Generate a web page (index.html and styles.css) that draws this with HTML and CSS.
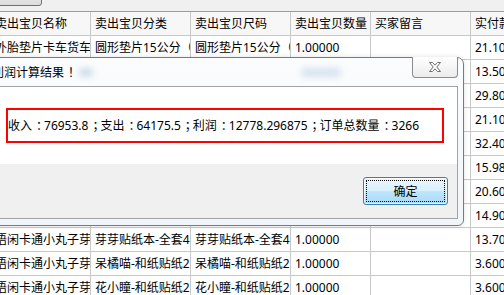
FILE: index.html
```html
<!DOCTYPE html>
<html lang="zh-CN">

<head>
    <meta charset="UTF-8">
    <title>订单利润</title>
    <link rel="stylesheet" href="styles.css">
</head>

<body>
    <div class="toolbar">
        <button class="tool-btn">计算</button>
    </div>

    <div class="grid">
        <div class="row head">
            <div class="cell">卖出宝贝名称</div>
            <div class="cell">卖出宝贝分类</div>
            <div class="cell">卖出宝贝尺码</div>
            <div class="cell">卖出宝贝数量</div>
            <div class="cell">买家留言</div>
            <div class="cell">实付款(元)</div>
        </div>
        <div class="row">
            <div class="cell">外胎垫片卡车货车轮胎</div>
            <div class="cell">圆形垫片15公分（10片）</div>
            <div class="cell">圆形垫片15公分（10片）</div>
            <div class="cell">1.00000</div>
            <div class="cell"></div>
            <div class="cell">21.1000</div>
        </div>
        <div class="row">
            <div class="cell">外胎垫片卡车货车轮胎</div>
            <div class="cell">圆形垫片10公分（5片）</div>
            <div class="cell">圆形垫片10公分（5片）</div>
            <div class="cell">1.00000</div>
            <div class="cell"></div>
            <div class="cell">13.5000</div>
        </div>
        <div class="row">
            <div class="cell">外胎垫片卡车货车轮胎</div>
            <div class="cell">圆形垫片20公分（10片）</div>
            <div class="cell">圆形垫片20公分（10片）</div>
            <div class="cell">1.00000</div>
            <div class="cell"></div>
            <div class="cell">29.8000</div>
        </div>
        <div class="row">
            <div class="cell">外胎垫片卡车货车轮胎</div>
            <div class="cell">圆形垫片15公分（10片）</div>
            <div class="cell">圆形垫片15公分（10片）</div>
            <div class="cell">1.00000</div>
            <div class="cell"></div>
            <div class="cell">21.1000</div>
        </div>
        <div class="row">
            <div class="cell">外胎垫片卡车货车轮胎</div>
            <div class="cell">圆形垫片25公分（10片）</div>
            <div class="cell">圆形垫片25公分（10片）</div>
            <div class="cell">1.00000</div>
            <div class="cell"></div>
            <div class="cell">32.4000</div>
        </div>
        <div class="row">
            <div class="cell">语闲卡通小丸子芽芽</div>
            <div class="cell">芽芽贴纸本-全套2本</div>
            <div class="cell">芽芽贴纸本-全套2本</div>
            <div class="cell">1.00000</div>
            <div class="cell"></div>
            <div class="cell">15.9800</div>
        </div>
        <div class="row">
            <div class="cell">语闲卡通小丸子芽芽</div>
            <div class="cell">芽芽贴纸本-全套6本</div>
            <div class="cell">芽芽贴纸本-全套6本</div>
            <div class="cell">1.00000</div>
            <div class="cell"></div>
            <div class="cell">20.6000</div>
        </div>
        <div class="row">
            <div class="cell">语闲卡通小丸子芽芽</div>
            <div class="cell">芽芽贴纸本-全套3本</div>
            <div class="cell">芽芽贴纸本-全套3本</div>
            <div class="cell">1.00000</div>
            <div class="cell"></div>
            <div class="cell">14.9000</div>
        </div>
        <div class="row">
            <div class="cell">语闲卡通小丸子芽芽</div>
            <div class="cell">芽芽贴纸本-全套4本</div>
            <div class="cell">芽芽贴纸本-全套4本</div>
            <div class="cell">1.00000</div>
            <div class="cell"></div>
            <div class="cell">13.7000</div>
        </div>
        <div class="row">
            <div class="cell">语闲卡通小丸子芽芽</div>
            <div class="cell">呆橘喵-和纸贴纸2卷</div>
            <div class="cell">呆橘喵-和纸贴纸2卷</div>
            <div class="cell">1.00000</div>
            <div class="cell"></div>
            <div class="cell">3.60000</div>
        </div>
        <div class="row">
            <div class="cell">语闲卡通小丸子芽芽</div>
            <div class="cell">花小瞳-和纸贴纸2卷</div>
            <div class="cell">花小瞳-和纸贴纸2卷</div>
            <div class="cell">1.00000</div>
            <div class="cell"></div>
            <div class="cell">3.60000</div>
        </div>
    </div>

    <!-- result message box over the grid -->
    <div class="dialog">
        <div class="title">
            <span>利润计算结果<span class="p">！</span></span>
            <span class="glow"></span>
            <span class="glow wide"></span>
        </div>
        <button class="close">
            <svg width="14" height="12" viewBox="0 0 14 12">
                <polygon points="1.5,1.5 4.5,1.5 7,4.2 9.5,1.5 12.5,1.5 8.8,6 12.5,10.5 9.5,10.5 7,7.8 4.5,10.5 1.5,10.5 5.2,6"
                    fill="#fff" stroke="#6f6f6f" stroke-width="1" />
            </svg>
        </button>
        <div class="client">
            <div class="message">
                <div class="result">收入<span class="p">：</span>76953.8<span class="p">；</span>支出<span class="p">：</span>64175.5<span class="p">；</span>利润<span class="p">：</span>12778.296875<span class="p">；</span>订单总数量<span class="p">：</span>3266</div>
            </div>
            <div class="buttons">
                <button class="ok">确定</button>
            </div>
        </div>
    </div>
</body>

</html>
```

FILE: styles.css
```css
/* Reset */
body {
    margin: 0;
    padding: 0;
    background-color: #f0f0f0;
    font-family: 'Noto Sans', 'Noto Sans CJK SC', sans-serif;
    font-size: 12px;
    color: #000;
    overflow: hidden;
}

/* Full-width punctuation: centre the glyph in its 1em box */
.p {
    display: inline-block;
    box-sizing: border-box;
    width: 12px;
    padding-left: 4px;
    white-space: nowrap;
}

/* Tool strip above the grid */
.toolbar {
    display: flex;
    align-items: flex-start;
    height: 11px;
}

.tool-btn {
    box-sizing: border-box;
    width: 62px;
    height: 20px;
    margin: -14px 0 0 -20px;
    border: 1px solid #707070;
    border-radius: 3px;
    background: linear-gradient(#f2f2f2, #dcdcdc);
    font: inherit;
    color: transparent;
}

/* Data grid */
.grid {
    border-top: 1px solid #9b9b9b;
    background-color: #fff;
}

.row {
    display: grid;
    grid-template-columns: 100px 100px 100px 80px 100px 80px;
    margin-left: -9px;
}

.cell {
    box-sizing: border-box;
    height: 24px;
    line-height: 23px;
    padding-left: 4px;
    border-right: 1px solid #c8c8c8;
    border-bottom: 1px solid #c8c8c8;
    white-space: nowrap;
    overflow: hidden;
}

.head .cell {
    background-color: #f7f7f7;
}

/* Message box */
.dialog {
    position: absolute;
    left: -20px;
    top: 57px;
    box-sizing: border-box;
    width: 484px;
    height: 169px;
    padding: 0 5px 6px 0;
    border: 1px solid #7a7a7a;
    border-radius: 0 7px 6px 0;
    background: linear-gradient(#fbfcfd, #f1f5f9);
    box-shadow: 0 0 5px rgba(0, 0, 0, 0.12);
    display: flex;
    flex-direction: column;
}

.title {
    display: flex;
    align-items: center;
    height: 28px;
    padding-left: 11px;
}

.glow {
    width: 14px;
    height: 9px;
    margin-left: 3px;
    border-radius: 5px;
    background-color: #cddcea;
    filter: blur(3px);
}

.glow.wide {
    width: 40px;
    margin-left: 208px;
    background-color: #d6e3ef;
}

.close {
    position: absolute;
    top: -1px;
    right: 5px;
    box-sizing: border-box;
    width: 46px;
    height: 21px;
    padding: 0;
    border: 1px solid #8c8c8c;
    border-top: none;
    border-radius: 0 0 4px 4px;
    background: linear-gradient(#ffffff, #ececec);
    display: flex;
    align-items: center;
    justify-content: center;
}

.client {
    flex: 1;
    display: flex;
    flex-direction: column;
    border: 1px solid #a3a3a3;
    border-left: none;
    margin-left: 2px;
}

.message {
    height: 77px;
    padding: 21px 0 0 23px;
    box-sizing: border-box;
    background-color: #fff;
}

.result {
    box-sizing: border-box;
    width: 438px;
    height: 35px;
    line-height: 31px;
    padding-left: 0;
    border: 2px solid #ff0000;
    white-space: nowrap;
}

.buttons {
    flex: 1;
    display: flex;
    justify-content: flex-end;
    align-items: flex-start;
    padding: 13px 9px 0 0;
    background-color: #f0f0f0;
}

.ok {
    box-sizing: border-box;
    width: 85px;
    height: 28px;
    border: 1px solid #3c7fb1;
    border-radius: 3px;
    background: linear-gradient(#eaf6fd 0%, #d9f0fc 48%, #bee6fd 52%, #a7d9f5 100%);
    box-shadow: inset 0 0 0 1px rgba(255, 255, 255, 0.7);
    outline: 1px dotted #000;
    outline-offset: -4px;
    font: inherit;
    color: #000;
}
```
